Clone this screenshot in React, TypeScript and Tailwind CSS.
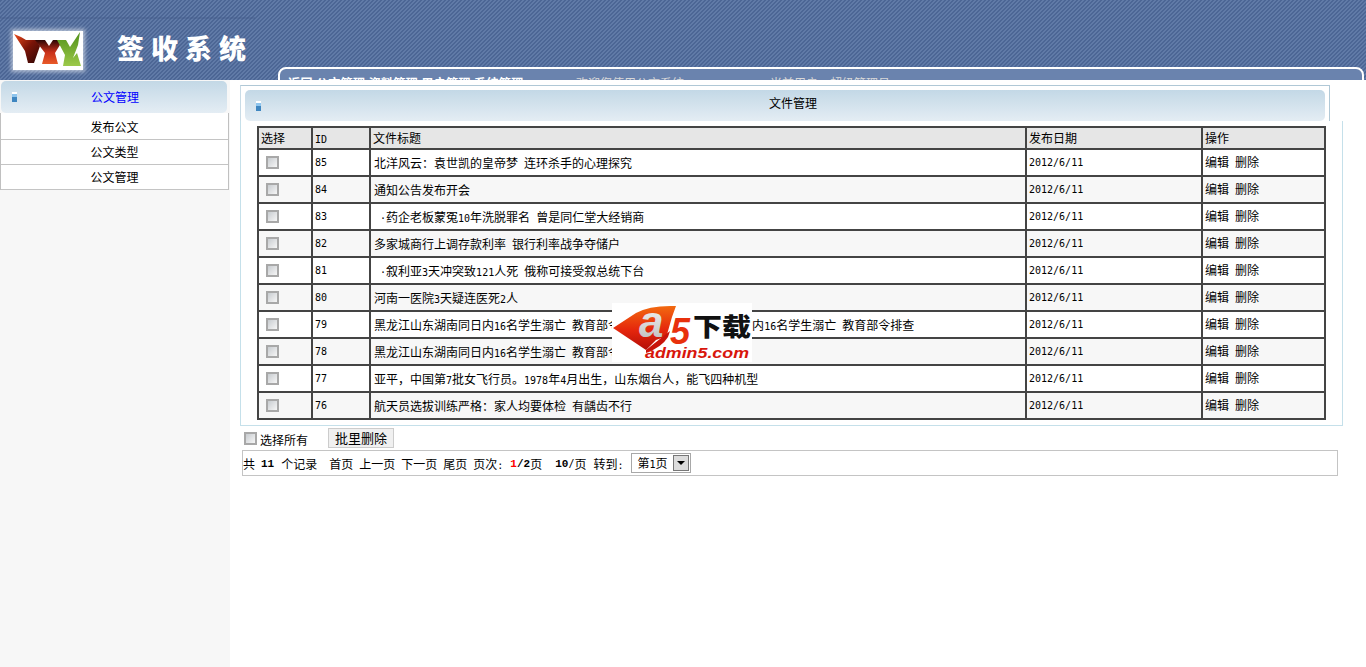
import React from "react";

const cjk = "font-['SimSun','Noto_Sans_CJK_SC',sans-serif]";
const mono = "font-['DejaVu_Sans_Mono',monospace] text-[10px] leading-none";
const monoB = "font-['Liberation_Mono',monospace] text-[11px] font-bold leading-none";

function T({ s }: { s: string }) {
  const parts = s.split(/([\x20-\x7e·]+)/).filter(Boolean);
  return (
    <>
      {parts.map((p, i) =>
        /^[\x20-\x7e·]+$/.test(p) ? (
          <span key={i} className={`${mono} whitespace-pre`}>
            {p}
          </span>
        ) : (
          <span key={i}>{p}</span>
        )
      )}
    </>
  );
}

const rows: [string, string][] = [
  ["85", "北洋风云：袁世凯的皇帝梦 连环杀手的心理探究"],
  ["84", "通知公告发布开会"],
  ["83", " ·药企老板蒙冤10年洗脱罪名 曾是同仁堂大经销商"],
  ["82", "多家城商行上调存款利率 银行利率战争夺储户"],
  ["81", " ·叙利亚3天冲突致121人死 俄称可接受叙总统下台"],
  ["80", "河南一医院3天疑连医死2人"],
  ["79", "黑龙江山东湖南同日内16名学生溺亡 教育部令排查黑龙江山东湖南同日内16名学生溺亡 教育部令排查"],
  ["78", "黑龙江山东湖南同日内16名学生溺亡 教育部令排查"],
  ["77", "亚平，中国第7批女飞行员。1978年4月出生，山东烟台人，能飞四种机型"],
  ["76", "航天员选拔训练严格：家人均要体检 有龋齿不行"],
];

function Bullet() {
  return (
    <span className="flex w-[5px] flex-col shrink-0">
      <span className="h-[2px] bg-white" />
      <span className="h-[3px] bg-[#8ec5ee]" />
      <span className="h-[5px] bg-[#3f86c0]" />
    </span>
  );
}

function Check() {
  return (
    <input
      type="checkbox"
      readOnly
      className="block appearance-none w-[13px] h-[13px] border-2 border-[#a8a8a8] bg-[linear-gradient(135deg,#c8ccd0,#f6f6f6)]"
    />
  );
}

function Logo() {
  return (
    <div className="w-[70px] h-[39px] bg-white shadow-[0_0_4px_2px_rgba(255,255,255,0.55)] shrink-0">
      <svg width="70" height="39" viewBox="0 0 70 39">
        <defs>
          <linearGradient id="ly" x1="0" y1="0" x2="1" y2="1">
            <stop offset="0" stopColor="#ee4c1c" />
            <stop offset="0.5" stopColor="#7a1408" />
            <stop offset="1" stopColor="#2c0604" />
          </linearGradient>
          <linearGradient id="ly2" x1="0" y1="0" x2="0" y2="1">
            <stop offset="0" stopColor="#2c0604" />
            <stop offset="0.5" stopColor="#c8301a" />
            <stop offset="1" stopColor="#e85a28" />
          </linearGradient>
          <linearGradient id="lg" x1="0" y1="0" x2="0" y2="1">
            <stop offset="0" stopColor="#4f8f18" />
            <stop offset="1" stopColor="#9cc94a" />
          </linearGradient>
        </defs>
        <polygon points="1,3 8,6 13,9 23,9 27,15 21,32 15,32 12,20" fill="url(#ly)" />
        <polygon points="22,9 32,9 36,15 40,9 50,9 42,22 45,33 29,33 32,22" fill="url(#ly2)" />
        <polygon points="44,9 53,9 57,16 67,1 65,14 60,27 64,22 68,35 50,35 52,24" fill="url(#lg)" />
      </svg>
    </div>
  );
}

function A5Logo() {
  return (
    <svg width="140" height="59" viewBox="0 0 140 59">
      <defs>
        <linearGradient id="ar" x1="0" y1="0" x2="0" y2="1">
          <stop offset="0" stopColor="#f26a10" />
          <stop offset="0.55" stopColor="#e5260c" />
          <stop offset="1" stopColor="#b40e08" />
        </linearGradient>
        <linearGradient id="as" x1="0" y1="0" x2="0" y2="1">
          <stop offset="0" stopColor="#ffffff" />
          <stop offset="1" stopColor="#b8b8b8" />
        </linearGradient>
      </defs>
      <path d="M1 25 L24 10 Q38 2 64 3 L60 14 L56 28 Q56 34 44 37 L34 47 Z" fill="url(#ar)" />
      <path d="M34 47 L58 28 L56 34 Q50 44 34 50 Z" fill="#c8140a" />
      <text x="27" y="34" fontSize="44" fontWeight="700" fontStyle="italic" fill="url(#as)" fontFamily="'Liberation Sans',sans-serif">
        a
      </text>
      <text x="58" y="41" fontSize="36" fontWeight="700" fontStyle="italic" fill="#e8300c" fontFamily="'Liberation Sans',sans-serif">
        5
      </text>
      <text x="81" y="33" fontSize="25" fontWeight="900" fill="#111" textLength="58" lengthAdjust="spacingAndGlyphs" fontFamily="'Noto Sans CJK SC',sans-serif">
        下载
      </text>
      <text x="33" y="55" fontSize="14" fontWeight="700" fontStyle="italic" fill="#d8160c" textLength="104" lengthAdjust="spacingAndGlyphs" fontFamily="'Liberation Sans',sans-serif">
        admin5.com
      </text>
    </svg>
  );
}

export default function App() {
  return (
    <div className={`relative w-[1366px] min-h-[667px] bg-white text-[12px] leading-[14px] text-black overflow-hidden ${cjk}`}>
      <header className="relative flex h-[80px] overflow-hidden pl-[13px] bg-[#56719f] bg-[linear-gradient(135deg,#4c6695_25%,#607aa7_25%,#607aa7_50%,#4c6695_50%,#4c6695_75%,#607aa7_75%)] bg-[size:4px_4px]">
        <div className="absolute left-0 top-[17px] h-[2px] w-[255px] bg-[#3f5786]/30" />
        <div className="mt-[31px]">
          <Logo />
        </div>
        <h1 className="ml-[34px] mt-[33px] h-[30px] text-[27px] leading-[30px] font-black tracking-[7px] text-white whitespace-nowrap font-['Noto_Sans_CJK_SC',sans-serif]">
          签收系统
        </h1>
        <nav className="absolute left-[278px] top-[67px] flex w-[1086px] h-[40px] rounded-t-[8px] border-2 border-white bg-[#6a83ae] pl-[8px] pt-[7px] whitespace-nowrap">
          <span className="font-bold text-white w-[288px] tracking-[0.4px]">返回 公文管理 资料管理 用户管理 系统管理</span>
          <span className="text-[#d8d8d8] w-[194px]">欢迎您使用公文系统</span>
          <span className="text-[#d8d8d8]">当前用户：超级管理员</span>
        </nav>
      </header>

      <div className="flex">
        <aside className="w-[230px] min-h-[587px] bg-[#f7f7f7] pt-px shrink-0">
          <div className="flex h-[32px] w-[226px] ml-px items-center rounded-[5px] bg-[linear-gradient(#c3d8e6,#e4edf4)] pl-[11px] pr-[14px]">
            <Bullet />
            <span className="flex-1 text-center text-[#0000ff]">公文管理</span>
          </div>
          <ul className="w-[229px] bg-white border-x border-[#c0c0c0]">
            {["发布公文", "公文类型", "公文管理"].map((m, i) => (
              <li key={m} className={`flex items-center justify-center border-b border-[#c4c4c4] ${i === 0 ? "h-[27px] pt-[2px]" : "h-[25px]"}`}>
                {m}
              </li>
            ))}
          </ul>
        </aside>

        <main className="flex-1 pl-[10px] pt-[5px] pr-[23px]">
          <div className="w-[1090px] h-[36px] border-x border-t border-x-[#c8dbe6] border-t-[#b0c8d6] border-r-[#b0c8d6] px-[4px] pt-[4px]">
            <div className="flex h-[31px] items-center rounded-[5px] bg-[linear-gradient(#c3d8e6,#e4edf4)] pl-[11px]">
              <Bullet />
              <span className="flex-1 text-center pb-[5px]">文件管理</span>
            </div>
          </div>
          <div className="h-[305px] w-[1103px] border-x border-b border-[#c5e0ea] pl-[16px] pt-[5px]">
            <table className="table-fixed border-collapse w-[1067px] border-2 border-[#444]">
              <colgroup>
                <col className="w-[54px]" />
                <col className="w-[58px]" />
                <col className="w-[656px]" />
                <col className="w-[176px]" />
                <col className="w-[123px]" />
              </colgroup>
              <thead>
                <tr className="h-[22px] bg-[#e6e6e6]">
                  {["选择", "ID", "文件标题", "发布日期", "操作"].map((h) => (
                    <th key={h} className="border-2 border-[#444] pl-[2px] text-left font-normal">
                      {h === "ID" ? <span className={mono}>ID</span> : h}
                    </th>
                  ))}
                </tr>
              </thead>
              <tbody>
                {rows.map(([id, title], i) => (
                  <tr key={id} className={`h-[27px] ${i % 2 ? "bg-[#f7f7f7]" : "bg-white"}`}>
                    <td className="border-2 border-[#444] pl-[7px]">
                      <Check />
                    </td>
                    <td className={`border-2 border-[#444] pl-[2px] ${mono}`}>{id}</td>
                    <td className="border-2 border-[#444] pl-[3px] whitespace-nowrap overflow-hidden">
                      <T s={title} />
                    </td>
                    <td className={`border-2 border-[#444] pl-[2px] ${mono}`}>2012/6/11</td>
                    <td className="border-2 border-[#444] pl-[2px]">
                      <div className="flex gap-[6px] h-[14px] -mt-px">
                        <span>编辑</span>
                        <span>删除</span>
                      </div>
                    </td>
                  </tr>
                ))}
              </tbody>
            </table>
          </div>

          <div className="flex h-[24px] items-center ml-[4px]">
            <Check />
            <span className="ml-[3px] mt-[3px]">选择所有</span>
            <button className="ml-[20px] h-[20px] w-[66px] border border-[#cccccc] bg-[#f0f0f0] text-center text-[13px]">批里删除</button>
          </div>

          <div className="flex h-[26px] w-[1096px] ml-[2px] items-center border border-[#c4c4c4] whitespace-nowrap">
            <span className="pt-[2px]">共</span>
            <b className={`ml-[6px] pt-[2px] ${monoB}`}>11</b>
            <span className="ml-[7px] pt-[2px]">个记录</span>
            <span className="ml-[12px] pt-[2px]">首页</span>
            <span className="ml-[6px] pt-[2px]">上一页</span>
            <span className="ml-[6px] pt-[2px]">下一页</span>
            <span className="ml-[6px] pt-[2px]">尾页</span>
            <span className="ml-[6px] pt-[2px]">页次<span className={mono}>:</span></span>
            <b className={`ml-[7px] pt-[2px] text-[#ff0000] ${monoB}`}>1</b>
            <b className={`pt-[2px] ${monoB}`}>/2</b>
            <span className="pt-[2px]">页</span>
            <b className={`ml-[13px] pt-[2px] ${monoB}`}>10</b>
            <span className={`pt-[2px] ${mono}`}>/</span>
            <span className="pt-[2px]">页</span>
            <span className="ml-[7px] pt-[2px]">转到<span className={mono}>:</span></span>
            <div className="ml-[8px] flex h-[20px] w-[60px] items-center justify-between border border-[#a8a8a8] pl-[5px] pr-px">
              <span>第<span className={mono}>1</span>页</span>
              <span className="flex h-[16px] w-[16px] items-center justify-center border border-[#777] bg-[#dcdcdc]">
                <span className="border-x-[4px] border-t-[4px] border-x-transparent border-t-black" />
              </span>
            </div>
          </div>
        </main>
      </div>

      <div className="absolute left-[612px] top-[303px] w-[140px] h-[59px] bg-white">
        <A5Logo />
      </div>
    </div>
  );
}
